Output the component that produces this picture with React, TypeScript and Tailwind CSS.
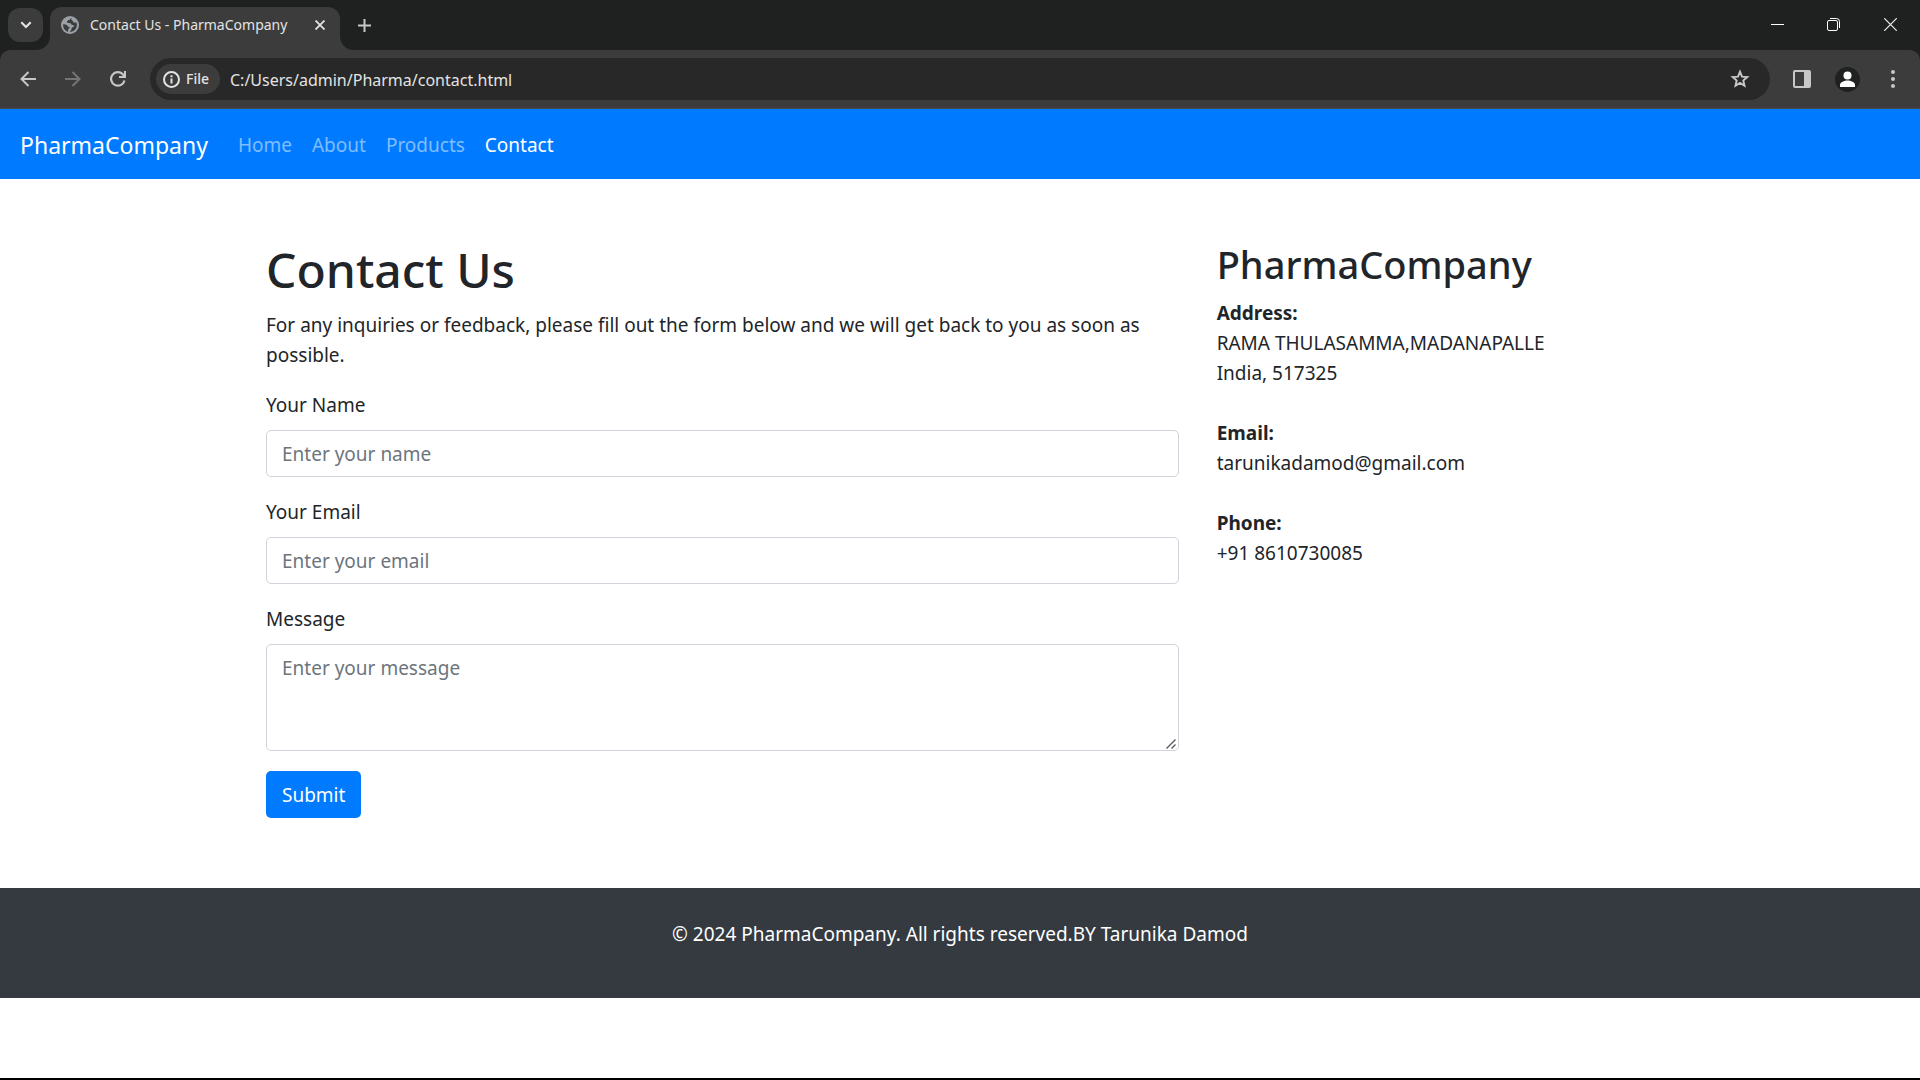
import type { ReactNode } from "react";

const body = "font-['Noto_Sans','Open_Sans',sans-serif]";

function TabFlare({ flip = false }: { flip?: boolean }) {
  return (
    <svg
      viewBox="0 0 14 14"
      className={flip ? "h-[14px] w-[14px] shrink-0 -scale-x-100" : "h-[14px] w-[14px] shrink-0"}
      aria-hidden="true"
    >
      <path d="M14 0v14H0C8 14 14 8 14 0z" fill="#3c3c3c" />
    </svg>
  );
}

function IconButton({ label, className, children }: { label: string; className: string; children: ReactNode }) {
  return (
    <button type="button" aria-label={label} className={`flex shrink-0 items-center justify-center ${className}`}>
      {children}
    </button>
  );
}

function TabStrip() {
  return (
    <div className="flex h-[50px] items-end bg-[#1f2120]">
      <div className="flex h-full items-start pt-2 pl-2">
        <IconButton label="Search tabs" className="h-[34px] w-[35px] rounded-xl bg-[#3c3c3c]">
          <svg width="12" height="8" viewBox="0 0 12 8" fill="none" stroke="#e3e3e3" strokeWidth="2.2">
            <path d="M1.3 1.3 6 6l4.700-4.700" />
          </svg>
        </IconButton>
      </div>
      <div className="-ml-[7px] flex items-end">
        <TabFlare />
        <div className="flex h-[43px] w-[290px] items-start rounded-t-xl bg-[#3c3c3c] pt-[9px] pl-[11px]">
          <svg width="18" height="18" viewBox="0 0 18 18" className="shrink-0" aria-hidden="true">
            <circle cx="9" cy="9" r="9" fill="#9aa0a6" />
            <path
              d="M10.200 1.900C9 2.300 9.300 3.300 8.300 4.200 7.500 5 6.300 4.600 5.900 5.600c-.3 1 .8 1.300 1.800 1.300 1.200 0 2.200.1 2.400 1.100.2.900 1.300 1 2.300 1.200 1 .3.800 1.700-.3 1.900-1.200.2-1.500.900-1.600 1.900-.1 1-.9 1.300-1.500 2.900 3.900-.1 6.900-3.200 6.900-6.900 0-1-.2-1.900-.6-2.700-1.200.6-2.700.4-3.100-.6-.5-1.200-1-.8-1.600-1.600-.5-.7 0-1.600-.4-2.200z"
              fill="#3c3c3c"
            />
            <path d="M2.100 8.200c1.500 0 2.900.2 4.100 1.200.8.7.8 1.500 1.800 1.700 1 .2.800 1.400-.2 1.600-.8.200-.7 1-.7 1.900v1.100C4 15 2 12.200 2.100 8.200z" fill="#3c3c3c" />
          </svg>
          <span className={`${body} ml-[11px] flex-1 text-sm leading-[18px] whitespace-nowrap text-[#e3e3e3]`}>
            Contact Us - PharmaCompany
          </span>
          <IconButton label="Close tab" className="mr-[10px] h-[18px] w-5">
            <svg width="10" height="10" viewBox="0 0 10 10" stroke="#e3e3e3" strokeWidth="1.800">
              <path d="M.5.5l9 9m0-9l-9 9" />
            </svg>
          </IconButton>
        </div>
        <TabFlare flip />
      </div>
      <IconButton label="New tab" className="h-full w-[21px]">
        <svg width="13" height="13" viewBox="0 0 13 13" stroke="#c7c7c7" strokeWidth="2">
          <path d="M6.500 0v13M0 6.500h13" />
        </svg>
      </IconButton>
      <div className="ml-auto flex h-full items-center pb-[2px]">
        <IconButton label="Minimize" className="h-full w-[57px]">
          <svg width="13" height="13" viewBox="0 0 13 13" stroke="#fff">
            <path d="M0 6.500h13" />
          </svg>
        </IconButton>
        <IconButton label="Restore" className="h-full w-[55px]">
          <svg width="13" height="13" viewBox="0 0 13 13" fill="none" stroke="#fff">
            <rect x=".5" y="2.500" width="10" height="10" rx="1.500" />
            <path d="M3 .5h6.500a3 3 0 0 1 3 3V10" />
          </svg>
        </IconButton>
        <IconButton label="Close window" className="h-full w-[59px]">
          <svg width="13" height="13" viewBox="0 0 13 13" stroke="#f0f0f0" strokeWidth="1.200">
            <path d="M.2.2l12.600 12.600M12.800.2L.2 12.800" />
          </svg>
        </IconButton>
      </div>
    </div>
  );
}

function Toolbar() {
  return (
    <div className="bg-[#1f2120]">
      <div className="flex h-[59px] items-start rounded-t-[10px] border-b border-[#4a4a4a] bg-[#3c3c3c] pt-2">
        <div className="flex h-[42px] items-center pl-[5px]">
          <IconButton label="Back" className="h-full w-[45px]">
            <svg width="16" height="16" viewBox="0 0 16 16" fill="none" stroke="#c7c7c7" strokeWidth="2">
              <path d="M16 8H2M8.500 1L1.500 8l7 7" />
            </svg>
          </IconButton>
          <IconButton label="Forward" className="h-full w-[45px]">
            <svg width="16" height="16" viewBox="0 0 16 16" fill="none" stroke="#757575" strokeWidth="2">
              <path d="M0 8h14M7.500 1l7 7-7 7" />
            </svg>
          </IconButton>
          <IconButton label="Reload" className="h-full w-[45px]">
            <svg width="16" height="16" viewBox="0 0 16 16" fill="none" stroke="#c7c7c7" strokeWidth="2.200">
              <path d="M14.500 9.500A6.800 6.800 0 1 1 13 3.400L14.500 5" />
              <path d="M15 0v6H9" />
            </svg>
          </IconButton>
        </div>
        <div className="ml-[10px] flex h-[42px] flex-1 items-center rounded-full bg-[#282828] pr-5 pl-[6px]">
          <button type="button" className="flex h-[30px] w-16 items-center rounded-full bg-[#3c3c3c] pl-[7px]">
            <svg width="17" height="17" viewBox="0 0 17 17" fill="none" stroke="#e3e3e3" strokeWidth="2" aria-hidden="true">
              <circle cx="8.500" cy="8.500" r="7.500" />
              <path d="M8.500 7.500V12.500M8.500 4.300v2" />
            </svg>
            <span className={`${body} ml-[6px] text-sm leading-5 font-medium text-[#e3e3e3]`}>File</span>
          </button>
          <input
            aria-label="Address"
            defaultValue="C:/Users/admin/Pharma/contact.html"
            className={`${body} ml-[10px] min-w-0 flex-1 bg-transparent pt-px text-base leading-6 text-[#e3e3e3] outline-none`}
          />
          <IconButton label="Bookmark this page" className="h-5 w-5">
            <svg width="20" height="20" viewBox="0 0 20 20" fill="none" stroke="#c7c7c7" strokeWidth="1.900">
              <path d="M10 2.700l2 4.900 5.300.4-4 3.500 1.200 5.200-4.500-2.800-4.500 2.800 1.200-5.200-4-3.500L8 7.600z" />
            </svg>
          </IconButton>
        </div>
        <div className="flex h-[42px] items-center pl-[9px]">
          <IconButton label="Side panel" className="h-full w-[46px]">
            <svg width="18" height="18" viewBox="0 0 18 18">
              <rect x="1" y="1" width="16" height="16" rx="1" fill="none" stroke="#c7c7c7" strokeWidth="2" />
              <path d="M11 1h6v16h-6z" fill="#c7c7c7" />
            </svg>
          </IconButton>
          <IconButton label="Profile" className="h-full w-[45px]">
            <svg width="25" height="25" viewBox="0 0 25 25">
              <circle cx="12.500" cy="12.500" r="12.500" fill="#1f2120" />
              <circle cx="12.500" cy="8.500" r="4" fill="#fff" />
              <path d="M5 20v-2c0-3 4.500-4.500 7.500-4.500S20 15 20 18v2z" fill="#fff" />
            </svg>
          </IconButton>
          <IconButton label="Menu" className="mr-[5px] h-full w-[45px]">
            <svg width="4" height="18" viewBox="0 0 4 18" fill="#c7c7c7">
              <circle cx="2" cy="2" r="2" />
              <circle cx="2" cy="9" r="2" />
              <circle cx="2" cy="16" r="2" />
            </svg>
          </IconButton>
        </div>
      </div>
    </div>
  );
}

function SiteNav() {
  return (
    <nav className="flex h-[70px] items-center bg-[#007bff] px-5 pt-[2px]">
      <a href="#" className="mr-5 text-[23px] leading-[38px] text-white">
        PharmaCompany
      </a>
      <ul className="flex text-white/50">
        <li>
          <a href="#" className="block p-[10px]">Home</a>
        </li>
        <li>
          <a href="#" className="block p-[10px]">About</a>
        </li>
        <li>
          <a href="#" className="block p-[10px]">Products</a>
        </li>
        <li>
          <a href="#" aria-current="page" className="block p-[10px] text-white">Contact</a>
        </li>
      </ul>
    </nav>
  );
}

const field =
  "block w-full rounded-[5px] border border-[#ced4da] bg-white px-[15px] placeholder:text-[#6c757d] outline-none";

function ContactForm() {
  return (
    <form onSubmit={(e) => e.preventDefault()}>
      <div className="mb-5">
        <label htmlFor="name" className="mb-[10px] block">Your Name</label>
        <input id="name" type="text" placeholder="Enter your name" className={`${field} h-[47px]`} />
      </div>
      <div className="mb-5">
        <label htmlFor="email" className="mb-[10px] block">Your Email</label>
        <input id="email" type="email" placeholder="Enter your email" className={`${field} h-[47px]`} />
      </div>
      <div className="mb-5">
        <label htmlFor="message" className="mb-[10px] block">Message</label>
        <div className="relative">
          <textarea
            id="message"
            placeholder="Enter your message"
            className={`${field} h-[107px] resize-y py-2 [&::-webkit-resizer]:bg-transparent`}
          />
          <svg
            viewBox="0 0 10 10"
            className="pointer-events-none absolute right-[3px] bottom-[2px] h-[10px] w-[10px]"
            stroke="#555"
            strokeWidth="1.300"
            aria-hidden="true"
          >
            <path d="M.5 9.500l9-9M5.500 9.500l4-4" />
          </svg>
        </div>
      </div>
      <button type="submit" className="block h-[47px] rounded-[5px] bg-[#007bff] px-4 text-white">
        Submit
      </button>
    </form>
  );
}

export default function App() {
  return (
    <div className="flex min-h-screen flex-col border-b-2 border-black bg-white">
      <header>
        <TabStrip />
        <Toolbar />
      </header>
      <div className={`${body} text-[19px] leading-[30px] text-[#212529]`}>
        <SiteNav />
        <main className="mx-auto mt-[61px] mb-[70px] grid w-full max-w-[1426px] grid-cols-3">
          <section className="col-span-2 px-[19px]">
            <h1 className="mb-[10px] text-5xl leading-[60px] font-medium">Contact Us</h1>
            <p className="mb-5">
              For any inquiries or feedback, please fill out the form below and we will get back to you as soon as
              possible.
            </p>
            <ContactForm />
          </section>
          <aside className="px-[19px]">
            <h2 className="mb-[10px] text-[38px] leading-[48px] font-medium">PharmaCompany</h2>
            <address className="not-italic">
              <strong>Address:</strong>
              <br />
              RAMA THULASAMMA,MADANAPALLE
              <br />
              India, 517325
              <br />
              <br />
              <strong>Email:</strong>
              <br />
              tarunikadamod@gmail.com
              <br />
              <br />
              <strong>Phone:</strong>
              <br />
              +91 8610730085
            </address>
          </aside>
        </main>
        <footer className="bg-[#343a40] px-5 pt-[31px] pb-[49px] text-center text-white">
          <p>© 2024 PharmaCompany. All rights reserved.BY Tarunika Damod</p>
        </footer>
      </div>
    </div>
  );
}
